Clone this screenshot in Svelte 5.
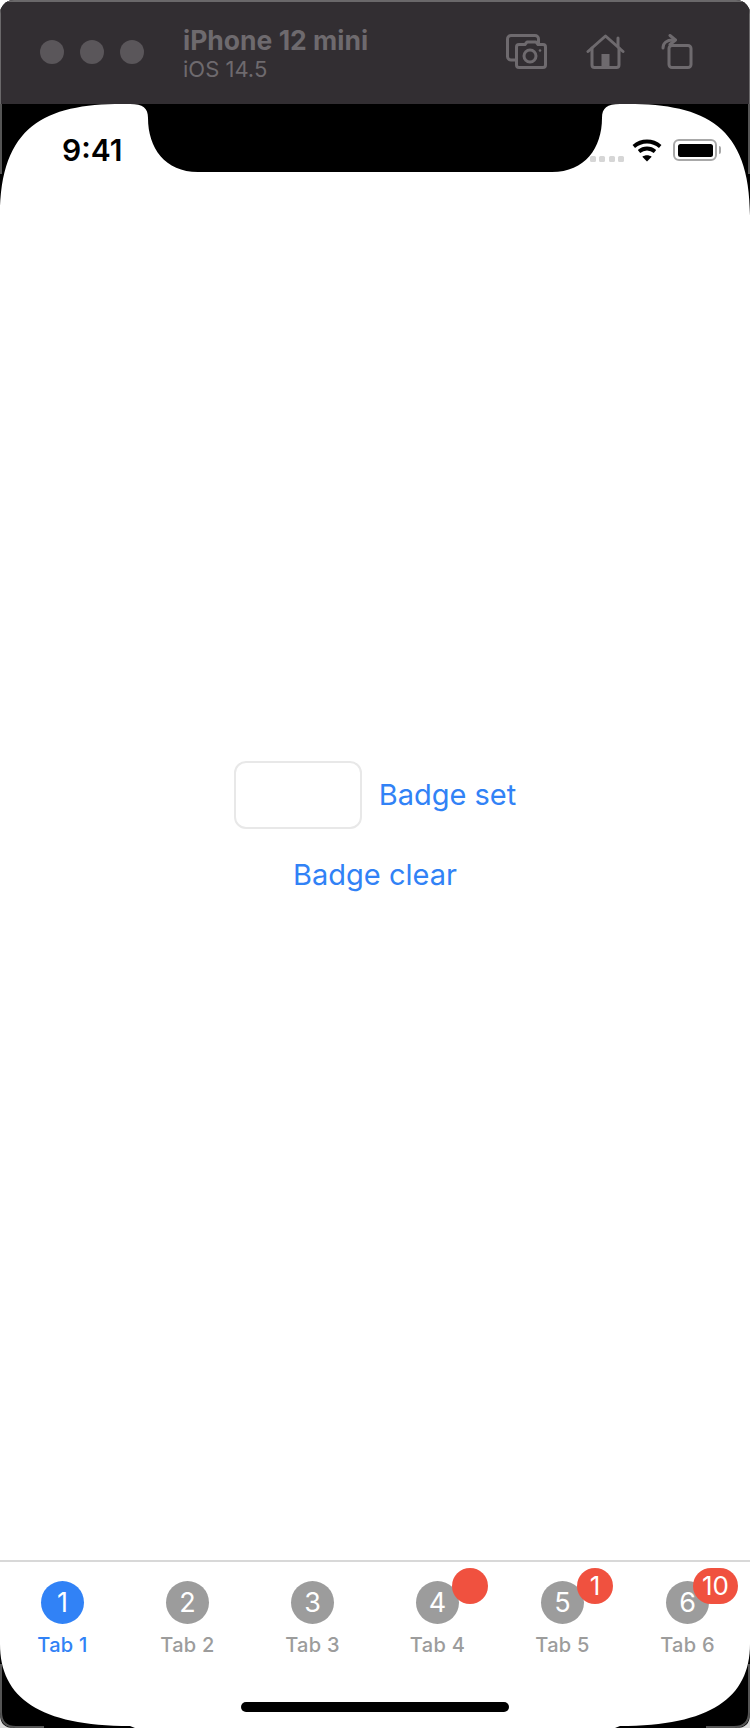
<script>
  const tabs = [
    { n: 1, label: 'Tab 1', active: true },
    { n: 2, label: 'Tab 2' },
    { n: 3, label: 'Tab 3' },
    { n: 4, label: 'Tab 4', badge: '' },
    { n: 5, label: 'Tab 5', badge: '1' },
    { n: 6, label: 'Tab 6', badge: '10' }
  ];
</script>

<div class="window">
  <header class="titlebar">
    <div class="lights"><span></span><span></span><span></span></div>
    <div class="device">
      <div class="name">iPhone 12 mini</div>
      <div class="os">iOS 14.5</div>
    </div>
    <div class="tools">
      <svg width="42" height="36" viewBox="0 0 42 36" class="ic">
        <path d="M9 26H5a3.500 3.500 0 0 1-3.500-3.500V5A3.500 3.500 0 0 1 5 1.500h24A3.500 3.500 0 0 1 32.500 5v4" />
        <path d="M13 10.500h6l2-2.500h9l2 2.500h5a2.500 2.500 0 0 1 2.500 2.500v18a2.500 2.500 0 0 1-2.500 2.500H13a2.500 2.500 0 0 1-2.500-2.500V13a2.500 2.500 0 0 1 2.500-2.500z" />
        <circle cx="24" cy="22" r="6" />
        <circle cx="34" cy="16.500" r="1.300" class="fill" />
      </svg>
      <svg width="40" height="36" viewBox="0 0 40 36" class="ic home">
        <path d="M2 17.500 19.500 2 37 17.500" />
        <path d="M6 14v17a2.500 2.500 0 0 0 2.500 2.500h22a2.500 2.500 0 0 0 2.500-2.500V14" />
        <path d="M32 4v8" />
        <rect x="15.500" y="20" width="8" height="14" class="fill" />
      </svg>
      <svg width="32" height="36" viewBox="0 0 32 36" class="ic rot">
        <rect x="8" y="11.500" width="22" height="22" rx="3" />
        <path d="M2 14c0-5 4-8 9.500-8" />
        <path d="M9 1.500 14.500 6 9 10.500" class="arrow" />
      </svg>
    </div>
  </header>

  <div class="screen">
    <div class="status">
      <span class="time">9:41</span>
      <div class="indicators">
        <div class="cell"><i></i><i></i><i></i><i></i></div>
        <svg width="30" height="23" viewBox="0 0 30 23" class="wifi">
          <path d="M15 22.500 10.300 17.800C13 15.800 17 15.800 19.700 17.800Z" />
          <path d="M1.800 7.500C9.500 .800 20.500 .800 28.200 7.500" />
          <path d="M7 12.500C11.800 8.500 18.200 8.500 23 12.500" />
        </svg>
        <div class="battery"><b></b></div>
      </div>
    </div>

    <main class="content">
      <div class="row">
        <input class="field" type="text" aria-label="Badge value" />
        <button>Badge set</button>
      </div>
      <button>Badge clear</button>
    </main>

    <nav class="tabbar">
      {#each tabs as t}
        <div class="tab" class:active={t.active}>
          <div class="icon">
            {t.n}
            {#if t.badge !== undefined}
              <span class="badge">{t.badge}</span>
            {/if}
          </div>
          <div class="label">{t.label}</div>
        </div>
      {/each}
    </nav>

    <div class="home-bar"></div>

    <svg class="mask" width="750" height="1624" viewBox="0 0 750 1624">
      <path d="M0 0H122C45 0 0 22 0 112Z" />
      <path d="M750 0H628C705 0 750 22 750 112Z" />
      <path d="M0 1540C0 1594 40 1622 130 1622L135 1624H0Z" />
      <path d="M750 1540C750 1594 710 1622 620 1622L615 1624H750Z" />
      <path d="M130 0C143 0 148 4 148 14C148 44 165 68 198 68H552C585 68 602 44 602 14C602 4 607 0 620 0Z" />
      <path class="edge" d="M1 0V70M1 1560V1608Q1 1623 16 1623H44" />
      <path class="edge" d="M749 0V70M749 1560V1608Q749 1623 734 1623H706" />
      <path class="outer" d="M0 1624V1610Q0 1624 14 1624Z" />
      <path class="outer" d="M750 1624V1610Q750 1624 736 1624Z" />
    </svg>
  </div>
</div>

<style>
  :global(body) {
    margin: 0;
    background: #fff;
  }
  .window {
    width: 750px;
    height: 1728px;
    display: flex;
    flex-direction: column;
    overflow: hidden;
    background: #000;
    border-radius: 14px 14px 0 0;
    font-family: Inter, "Liberation Sans", sans-serif;
  }
  .titlebar {
    box-sizing: border-box;
    height: 104px;
    flex: none;
    display: flex;
    align-items: flex-start;
    background: #322e32;
    border: solid #6a686a;
    border-width: 2px 1px 0;
  }
  .lights {
    display: flex;
    gap: 16px;
    padding: 38px 0 0 39px;
  }
  .lights span {
    width: 24px;
    height: 24px;
    border-radius: 50%;
    background: #5a565a;
  }
  .device {
    margin-left: 39px;
    padding-top: 22px;
  }
  .name {
    font-size: 26.500px;
    line-height: 32px;
    font-weight: 700;
    color: #6e6a6e;
  }
  .os {
    font-size: 22px;
    line-height: 26px;
    color: #6e6a6e;
  }
  .tools {
    margin-left: auto;
    display: flex;
    padding: 32px 56px 0 0;
  }
  .tools .ic + .ic {
    margin-left: 38px;
  }
  .tools .ic.rot {
    margin-left: 35px;
  }
  .ic {
    fill: none;
    stroke: #6e6a6e;
    stroke-width: 3;
    stroke-linecap: round;
    stroke-linejoin: round;
  }
  .ic .fill {
    fill: #6e6a6e;
    stroke: none;
  }
  .screen {
    position: relative;
    flex: 1;
    min-height: 0;
    display: flex;
    flex-direction: column;
    background: #fff;
  }
  .status {
    flex: none;
    height: 68px;
    display: flex;
    justify-content: space-between;
    align-items: flex-start;
    padding: 0 33px 0 62px;
  }
  .time {
    margin-top: 28px;
    font-size: 30px;
    line-height: 36px;
    font-weight: 600;
    color: #000;
  }
  .indicators {
    display: flex;
    align-items: center;
    gap: 10px;
    margin-top: 34px;
    height: 24px;
  }
  .cell {
    display: flex;
    gap: 3.500px;
    margin-top: 18px;
    margin-right: -2px;
  }
  .cell i {
    width: 6px;
    height: 6px;
    border-radius: 1.500px;
    background: #d6d6d6;
  }
  .wifi {
    fill: none;
    stroke: #000;
    stroke-width: 3.800;
  }
  .wifi path:first-child {
    fill: #000;
    stroke: none;
  }
  .battery {
    position: relative;
    box-sizing: border-box;
    width: 44px;
    height: 22px;
    margin-left: 1px;
    padding: 2.500px;
    border: 2px solid #a8a8a8;
    border-radius: 6px;
  }
  .battery b {
    display: block;
    height: 100%;
    background: #000;
    border-radius: 2.500px;
  }
  .battery::after {
    content: "";
    position: absolute;
    right: -6px;
    top: 5px;
    width: 2px;
    height: 8px;
    background: #a8a8a8;
    border-radius: 0 2px 2px 0;
  }
  .content {
    flex: 1;
    display: flex;
    flex-direction: column;
    align-items: center;
    justify-content: center;
    gap: 26px;
    padding-bottom: 76px;
  }
  .row {
    display: flex;
    align-items: center;
    gap: 17px;
  }
  .field {
    box-sizing: border-box;
    width: 128px;
    height: 68px;
    border: 2px solid #e8e8e8;
    border-radius: 12px;
    background: #fff;
    padding: 0;
  }
  button {
    border: 0;
    background: none;
    padding: 0;
    font: 400 29px/40px Inter, "Liberation Sans", sans-serif;
    color: #3182f6;
  }
  .tabbar {
    flex: none;
    box-sizing: border-box;
    height: 168px;
    display: grid;
    grid-template-columns: repeat(6, 125px);
    border-top: 2px solid #d8d8d8;
    background: #fff;
  }
  .tab {
    display: flex;
    flex-direction: column;
    align-items: center;
    padding-top: 19px;
    color: #9c9c9c;
  }
  .icon {
    position: relative;
    width: 43px;
    height: 43px;
    border-radius: 50%;
    background: #9c9c9c;
    color: #fff;
    font-size: 27px;
    line-height: 43px;
    text-align: center;
  }
  .label {
    margin-top: 8px;
    font-size: 20px;
    line-height: 26px;
    font-weight: 500;
    letter-spacing: 0.300px;
  }
  .active {
    color: #3182f6;
  }
  .active .icon {
    background: #3182f6;
  }
  .badge {
    position: absolute;
    right: -29px;
    top: -13px;
    box-sizing: border-box;
    min-width: 36px;
    height: 36px;
    padding: 0 9px;
    border-radius: 18px;
    background: #f0513f;
    color: #fff;
    font-size: 26px;
    line-height: 36px;
    text-align: center;
  }
  .home-bar {
    position: absolute;
    left: 241px;
    bottom: 16px;
    width: 268px;
    height: 10px;
    border-radius: 5px;
    background: #000;
  }
  .mask {
    position: absolute;
    left: 0;
    top: 0;
    fill: #000;
    pointer-events: none;
  }
  .mask .edge {
    fill: none;
    stroke: #555;
    stroke-width: 2;
  }
  .mask .outer {
    fill: #ddd;
  }
</style>
